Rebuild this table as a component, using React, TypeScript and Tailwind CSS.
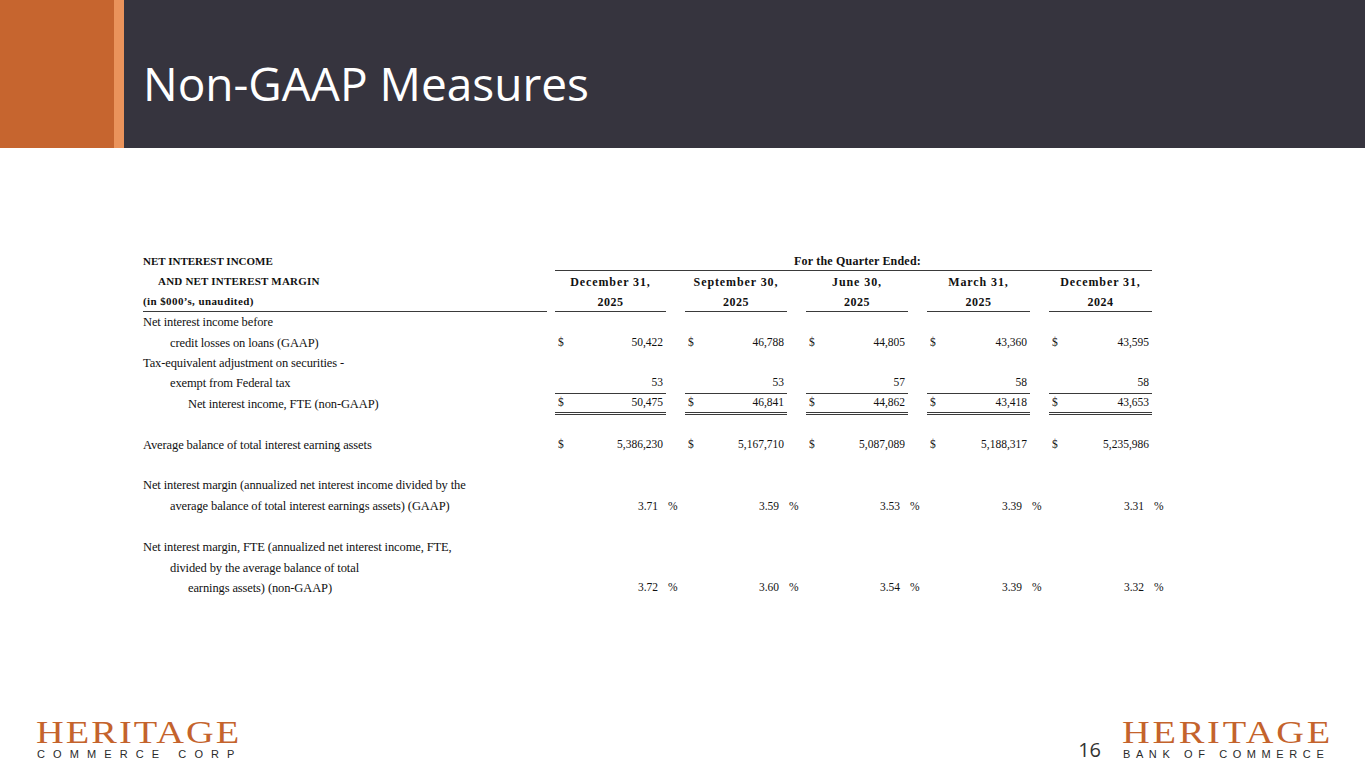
import React from "react";

const serif = { fontFamily: '"Liberation Serif", "Times New Roman", serif' };
const sans = { fontFamily: '"Liberation Sans", Arial, sans-serif' };

const W = [111, 102, 102, 103, 103];

type Cell = { d?: boolean; v?: string; pct?: boolean };

function DataRow({
  label,
  indent = 0,
  cells,
  line,
  h = 20,
}: {
  label: string;
  indent?: number;
  cells?: Cell[];
  line?: "single" | "double";
  h?: number;
}) {
  return (
    <div className="flex items-center" style={{ height: h }}>
      <div
        className="w-[412px] shrink-0 whitespace-nowrap text-[12.5px] tracking-[-0.12px]"
        style={{ paddingLeft: indent }}
      >
        {label}
      </div>
      {W.map((w, i) => {
        const c = cells ? cells[i] : undefined;
        const border =
          line === "single"
            ? "border-b border-[#3a3a3a]"
            : line === "double"
            ? "border-b-[3px] border-double border-[#3a3a3a]"
            : "";
        return (
          <React.Fragment key={i}>
            <div className={`shrink-0 flex h-full items-center text-[11.5px] ${border}`} style={{ width: w }}>
              {c && c.v ? (
                c.pct ? (
                  <div className="w-full text-right pr-[8px]">{c.v}</div>
                ) : (
                  <div className="flex w-full items-center justify-between pl-[3px] pr-[3px]">
                    <span>{c.d ? "$" : ""}</span>
                    <span>{c.v}</span>
                  </div>
                )
              ) : null}
            </div>
            <div className="w-[19px] shrink-0 pl-[2px] text-[11.5px]">{c && c.pct ? "%" : ""}</div>
          </React.Fragment>
        );
      })}
    </div>
  );
}

const dollar = (vals: string[]): Cell[] => vals.map((v) => ({ d: true, v }));
const plain = (vals: string[]): Cell[] => vals.map((v) => ({ v }));
const pct = (vals: string[]): Cell[] => vals.map((v) => ({ v, pct: true }));

function Logo({
  sub,
  width,
  topTrack,
  subTrack,
}: {
  sub: string;
  width: number;
  topTrack: number;
  subTrack: number;
}) {
  return (
    <div className="flex flex-col items-start" style={{ width }}>
      <div className="h-[31px] w-full overflow-visible">
        <div
          className="text-[#c4632c] text-[32px] leading-none origin-left scale-x-[1.2] whitespace-nowrap"
          style={{ ...serif, letterSpacing: topTrack }}
        >
          HERITAGE
        </div>
      </div>
      <div
        className="text-[#2a2a2a] text-[11px] leading-none mt-[2px] whitespace-nowrap pl-[1px]"
        style={{ ...sans, letterSpacing: subTrack }}
      >
        {sub}
      </div>
    </div>
  );
}

export default function App() {
  const heads = ["December 31,", "September 30,", "June 30,", "March 31,", "December 31,"];
  const years = ["2025", "2025", "2025", "2025", "2024"];
  return (
    <div className="w-[1365px] h-[768px] bg-white flex flex-col overflow-hidden">
      {/* Header */}
      <div className="flex h-[148px] shrink-0">
        <div className="w-[114px] bg-[#c6652f]" />
        <div className="w-[10px] bg-[#ea935b]" />
        <div className="flex-1 bg-[#36343e] flex items-start pl-[19px] pt-[60px]">
          <h1
            className="text-white text-[46px] leading-none"
            style={{ fontFamily: '"Open Sans", "Noto Sans", sans-serif' }}
          >
            Non-GAAP Measures
          </h1>
        </div>
      </div>

      {/* Table */}
      <div className="mt-[103px] ml-[143px] text-[#111] leading-none" style={serif}>
        {/* header row 1 */}
        <div className="flex h-[20px] items-center font-bold">
          <div className="w-[412px] shrink-0 text-[11px]">NET INTEREST INCOME</div>
          <div className="w-[597px] h-full flex items-center justify-center border-b border-[#3a3a3a] text-[12px] tracking-[0.2px] pl-[8px]">
            For the Quarter Ended:
          </div>
        </div>
        {/* header row 2 */}
        <div className="flex h-[21px] items-center font-bold">
          <div className="w-[412px] shrink-0 pl-[15px] text-[11px] tracking-[0.2px]">AND NET INTEREST MARGIN</div>
          {W.map((w, i) => (
            <React.Fragment key={i}>
              <div className="shrink-0 text-center text-[12px] tracking-[0.9px]" style={{ width: w }}>
                {heads[i]}
              </div>
              <div className="w-[19px] shrink-0" />
            </React.Fragment>
          ))}
        </div>
        {/* header row 3 */}
        <div className="flex h-[20px] items-stretch font-bold">
          <div className="w-[412px] shrink-0">
            <div className="w-[404px] h-full flex items-center border-b border-[#3a3a3a] text-[11px] tracking-[0.4px]">
              (in $000’s, unaudited)
            </div>
          </div>
          {W.map((w, i) => (
            <React.Fragment key={i}>
              <div
                className="shrink-0 flex items-center justify-center border-b border-[#3a3a3a] text-[12px] tracking-[0.5px]"
                style={{ width: w }}
              >
                {years[i]}
              </div>
              <div className="w-[19px] shrink-0" />
            </React.Fragment>
          ))}
        </div>

        <DataRow label="Net interest income before" h={21} />
        <DataRow
          label="credit losses on loans (GAAP)"
          indent={27}
          cells={dollar(["50,422", "46,788", "44,805", "43,360", "43,595"])}
        />
        <DataRow label="Tax-equivalent adjustment on securities -" />
        <DataRow
          label="exempt from Federal tax"
          indent={27}
          cells={plain(["53", "53", "57", "58", "58"])}
          line="single"
          h={21}
        />
        <DataRow
          label="Net interest income, FTE (non-GAAP)"
          indent={45}
          cells={dollar(["50,475", "46,841", "44,862", "43,418", "43,653"])}
          line="double"
          h={21}
        />
        <div className="h-[20px]" />
        <DataRow
          label="Average balance of total interest earning assets"
          cells={dollar(["5,386,230", "5,167,710", "5,087,089", "5,188,317", "5,235,986"])}
        />
        <div className="h-[20px]" />
        <DataRow label="Net interest margin (annualized net interest income divided by the" h={21} />
        <DataRow
          label="average balance of total interest earnings assets) (GAAP)"
          indent={27}
          cells={pct(["3.71", "3.59", "3.53", "3.39", "3.31"])}
          h={21}
        />
        <div className="h-[20px]" />
        <DataRow label="Net interest margin, FTE (annualized net interest income, FTE," h={21} />
        <DataRow label="divided by the average balance of total" indent={27} />
        <DataRow
          label="earnings assets) (non-GAAP)"
          indent={45}
          cells={pct(["3.72", "3.60", "3.54", "3.39", "3.32"])}
        />
      </div>

      {/* Footer */}
      <div className="mt-auto flex items-end justify-between pl-[36px] pr-[35px] pb-[8px]">
        <Logo sub="COMMERCE CORP" width={201} topTrack={1.7} subTrack={8.1} />
        <div className="flex items-end">
          <div
            className="text-[#333] text-[20px] leading-none mr-[21px]"
            style={{ fontFamily: '"Open Sans", "Noto Sans", sans-serif' }}
          >
            16
          </div>
          <Logo sub="BANK OF COMMERCE" width={208} topTrack={2.3} subTrack={5.6} />
        </div>
      </div>
    </div>
  );
}
